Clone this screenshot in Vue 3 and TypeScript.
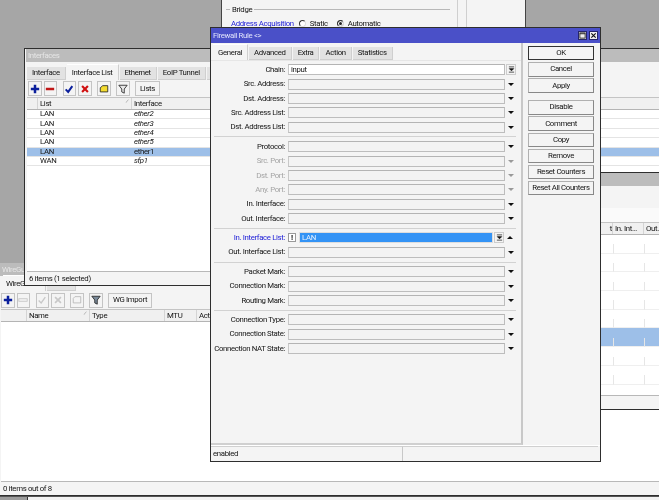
<template>
  <div class="desktop">
    <!-- bridge window, only its lower edge shows -->
    <div class="win bridge-win">
      <div class="bridge-main">
        <div class="bridge-legend"><span class="dash"></span><span>Bridge</span><span class="legend-line"></span></div>
        <div class="bridge-row">
          <span class="blue">Address Acquisition</span>
          <span class="radio"></span><span>Static</span>
          <span class="radio radio--on"></span><span>Automatic</span>
        </div>
      </div>
      <div class="bridge-side"></div>
    </div>

    <!-- wireguard window -->
    <div class="win wg-win">
      <div class="title title--off">WireGuard</div>
      <div class="tabs">
        <span class="tab tab--on wg-tab-main">WireGuard</span>
        <span class="tab">Peers</span>
      </div>
      <div class="toolbar wg-toolbar">
        <span class="tool"><svg viewBox="0 0 12 12"><path d="M4.500 1h3v3.500h3.500v3H7.500V11h-3V7.500H1v-3h3.500z" fill="#0b1f9c" /></svg></span>
        <span class="tool tool--off"><svg viewBox="0 0 12 12"><rect x="1" y="4.500" width="10" height="3" fill="#f4f4f4" stroke="#c4c4c4" /></svg></span>
        <span class="tool tool--off tool--gap"><svg viewBox="0 0 12 12"><path d="M2 6.500l3 3 5-7" fill="none" stroke="#c8c8c8" stroke-width="1.600" /></svg></span>
        <span class="tool tool--off"><svg viewBox="0 0 12 12"><path d="M2.500 2.500l7 7m0-7l-7 7" fill="none" stroke="#c8c8c8" stroke-width="2" /></svg></span>
        <span class="tool tool--off tool--gap"><svg viewBox="0 0 12 12"><path d="M1.500 4l2-2h7v7.500h-9z" fill="#f4f4f4" stroke="#b4b4b4" /></svg></span>
        <span class="tool tool--gap"><svg viewBox="0 0 12 12"><path d="M1 1.500h10L7.500 6v5l-3-1.500V6z" fill="#7a8a9a" stroke="#222" /></svg></span>
        <span class="text-tool tool--gap">WG Import</span>
      </div>
      <div class="thead wg-head">
        <span class="th" style="width: 26px"></span>
        <span class="th" style="width: 63px">Name<i class="sort">⁄</i></span>
        <span class="th" style="width: 75px">Type</span>
        <span class="th" style="width: 32px">MTU</span>
        <span class="th" style="flex: 1">Actions</span>
      </div>
      <div class="tbody"></div>
      <div class="status">0 items out of 8</div>
    </div>
    <div class="taskbar"><span class="task-btn"></span></div>

    <!-- interfaces window -->
    <div class="win if-win">
      <div class="title title--off">Interfaces</div>
      <div class="tabs if-tabs">
        <span v-for="t in ifTabs" :key="t" class="tab" :class="{ 'tab--on': t === 'Interface List' }">{{ t }}</span>
      </div>
      <div class="toolbar if-toolbar">
        <span class="tool"><svg viewBox="0 0 12 12"><path d="M4.500 1h3v3.500h3.500v3H7.500V11h-3V7.500H1v-3h3.500z" fill="#0b1f9c" /></svg></span>
        <span class="tool"><svg viewBox="0 0 12 12"><rect x="1" y="4.500" width="10" height="3" fill="#c01818" /></svg></span>
        <span class="tool tool--gap"><svg viewBox="0 0 12 12"><path d="M2 6.500l3 3 5-7" fill="none" stroke="#0b1f9c" stroke-width="2.400" /></svg></span>
        <span class="tool"><svg viewBox="0 0 12 12"><path d="M2.500 2.500l7 7m0-7l-7 7" fill="none" stroke="#d01010" stroke-width="2.600" /></svg></span>
        <span class="tool tool--gap"><svg viewBox="0 0 12 12"><path d="M1.500 4.500l3-2.500h6v7.500h-9z" fill="#f4dc30" stroke="#222" /></svg></span>
        <span class="tool tool--gap"><svg viewBox="0 0 12 12"><path d="M1 1.500h10L7.500 6v5l-3-1.500V6z" fill="#e8e8e8" stroke="#222" /></svg></span>
        <span class="text-tool tool--gap if-lists">Lists</span>
      </div>
      <div class="thead if-head">
        <span class="th" style="width: 11px"></span>
        <span class="th" style="width: 94px">List<i class="sort">⁄</i></span>
        <span class="th" style="flex: 1">Interface</span>
      </div>
      <div class="tbody">
        <div v-for="r in ifRows" :key="r.name" class="tr" :class="{ 'tr--sel': r.sel }">
          <span class="td" style="width: 11px"></span>
          <span class="td" style="width: 94px">{{ r.list }}</span>
          <span class="td" :class="{ dyn: !r.sel }">{{ r.name }}</span>
        </div>
      </div>
      <div class="status">6 items (1 selected)</div>
    </div>

    <!-- window behind the rule dialog, on the right -->
    <div class="win fw-win">
      <div class="title title--off"></div>
      <div class="fw-bar"></div>
      <div class="thead fw-head">
        <span class="th" style="width: 212px; justify-content: flex-end">t</span>
        <span class="th" style="width: 31px">In. Int...</span>
        <span class="th" style="flex: 1">Out.</span>
      </div>
      <div class="tbody">
        <template v-for="i in 8" :key="i">
          <div class="fw-note" :class="{ 'tr--sel': i === 6 }"></div>
          <div class="fw-data" :class="{ 'tr--sel': i === 6 }">
            <span class="fw-cell" style="width: 212px"></span>
            <span class="fw-cell" style="width: 31px"></span>
            <span class="fw-cell" style="flex: 1"></span>
          </div>
        </template>
      </div>
      <div class="status"></div>
    </div>

    <!-- firewall rule dialog -->
    <div class="win rule-win">
      <div class="title rule-title">
        <span>Firewall Rule &lt;&gt;</span>
        <span class="title-btns">
          <span class="title-btn"><svg viewBox="0 0 8 8"><rect x="1" y="1" width="6" height="6" fill="none" stroke="#222" /><path d="M1 2h6" stroke="#222" /></svg></span>
          <span class="title-btn"><svg viewBox="0 0 8 8"><path d="M1.500 1.500l5 5m0-5l-5 5" stroke="#111" stroke-width="1.300" /></svg></span>
        </span>
      </div>
      <div class="rule-body">
        <div class="rule-left">
          <div class="tabs rule-tabs">
            <span v-for="t in ruleTabs" :key="t" class="tab" :class="{ 'tab--on': t === 'General' }">{{ t }}</span>
          </div>
          <div class="form">
            <template v-for="(group, g) in formGroups" :key="g">
              <div v-if="g > 0" class="sep"></div>
              <div v-for="f in group" :key="f.label" class="field-row">
                <label class="field-label" :class="{ blue: f.active, muted: f.off }">{{ f.label }}:</label>
                <span v-if="f.active" class="negate">!</span>
                <span class="input" :class="{ 'input--val': f.value, 'input--short': f.active }">
                  <span v-if="f.active" class="picked">{{ f.value }}</span>
                  <template v-else>{{ f.value }}</template>
                </span>
                <span v-if="f.value" class="drop-box">
                  <svg viewBox="0 0 8 8"><path d="M1 1h6M1.500 3h5L4 5.500zM1 7h6" fill="#111" stroke="#111" stroke-width=".8" /></svg>
                </span>
                <span v-if="f.active || !f.value" class="arrow" :class="{ 'arrow--up': f.active, 'arrow--off': f.off }"></span>
              </div>
            </template>
          </div>
        </div>
        <div class="rule-buttons">
          <template v-for="(b, i) in ruleButtons" :key="b">
            <div v-if="i === 3" class="btn-gap"></div>
            <button class="btn" :class="{ 'btn--def': b === 'OK' }">{{ b }}</button>
          </template>
        </div>
      </div>
      <div class="rule-status">
        <span class="rule-status-a">enabled</span>
        <span class="rule-status-b"></span>
      </div>
    </div>
  </div>
</template>

<script setup lang="ts">
interface FormField {
  label: string
  value?: string
  off?: boolean
  active?: boolean
}

const ifTabs = ['Interface', 'Interface List', 'Ethernet', 'EoIP Tunnel', 'IP Tunnel', 'GRE Tunnel', 'VLAN']
const ifRows = [
  { list: 'LAN', name: 'ether2' },
  { list: 'LAN', name: 'ether3' },
  { list: 'LAN', name: 'ether4' },
  { list: 'LAN', name: 'ether5' },
  { list: 'LAN', name: 'ether1', sel: true },
  { list: 'WAN', name: 'sfp1' },
]

const ruleTabs = ['General', 'Advanced', 'Extra', 'Action', 'Statistics']
const ruleButtons = ['OK', 'Cancel', 'Apply', 'Disable', 'Comment', 'Copy', 'Remove', 'Reset Counters', 'Reset All Counters']

const formGroups: FormField[][] = [
  [
    { label: 'Chain', value: 'input' },
    { label: 'Src. Address' },
    { label: 'Dst. Address' },
    { label: 'Src. Address List' },
    { label: 'Dst. Address List' },
  ],
  [
    { label: 'Protocol' },
    { label: 'Src. Port', off: true },
    { label: 'Dst. Port', off: true },
    { label: 'Any. Port', off: true },
    { label: 'In. Interface' },
    { label: 'Out. Interface' },
  ],
  [
    { label: 'In. Interface List', value: 'LAN', active: true },
    { label: 'Out. Interface List' },
  ],
  [
    { label: 'Packet Mark' },
    { label: 'Connection Mark' },
    { label: 'Routing Mark' },
  ],
  [
    { label: 'Connection Type' },
    { label: 'Connection State' },
    { label: 'Connection NAT State' },
  ],
]
</script>

<style>
html,
body {
  margin: 0;
  background: #a6a6a6;
}
</style>

<style scoped>
.desktop {
  position: relative;
  width: 659px;
  height: 500px;
  overflow: hidden;
  background: #a6a6a6;
  font-family: Roboto, "Liberation Sans", sans-serif;
  font-size: 7.8px;
  letter-spacing: -0.35px;
  line-height: 1;
  color: #141414;
  filter: blur(0.3px);
}

.win {
  position: absolute;
  box-sizing: border-box;
  display: flex;
  flex-direction: column;
  background: #f4f4f4;
  border: 1px solid #2e2e2e;
}

.blue {
  color: #2222d8;
}

.muted {
  color: #a4a4a4;
}

/* bridge */
.bridge-win {
  left: 221px;
  top: -10px;
  width: 305px;
  height: 40px;
  flex-direction: row;
  border-top: 0;
  border-color: #444;
}

.bridge-main {
  width: 231px;
  padding: 16px 0 0 4px;
  border-right: 1px solid #cfcfcf;
}

.bridge-legend {
  display: flex;
  align-items: center;
  gap: 2px;
}

.dash {
  width: 4px;
  height: 1px;
  background: #b8b8b8;
}

.legend-line {
  flex: 1;
  height: 1px;
  margin-right: 7px;
  background: #b8b8b8;
}

.bridge-row {
  display: flex;
  align-items: center;
  gap: 4px;
  margin-top: 6px;
  padding-left: 5px;
  white-space: nowrap;
}

.radio {
  box-sizing: border-box;
  width: 7px;
  height: 7px;
  margin-left: 1px;
  border: 1px solid #333;
  border-right-color: #ddd;
  border-bottom-color: #ddd;
  border-radius: 50%;
  background: #fff;
}

.radio--on {
  margin-left: 5px;
  background: #222;
  box-shadow: inset 0 0 0 1px #fff;
}

.bridge-side {
  width: 8px;
  border-right: 1px solid #cfcfcf;
}

/* titles, tabs, toolbars */
.title {
  flex: none;
  height: 13px;
  padding-left: 2px;
  display: flex;
  align-items: center;
  white-space: nowrap;
}

.title--off {
  background: #bcbcbc;
  color: #e6e6e6;
}

.tabs {
  display: flex;
  flex: none;
  align-items: flex-end;
  gap: 1px;
  height: 17px;
  padding-left: 3px;
  white-space: nowrap;
}

.tab {
  display: flex;
  align-items: center;
  height: 12.5px;
  padding: 0 5px;
  background: #e2e2e2;
  border-right: 1px solid #cfcfcf;
  border-bottom: 1px solid #cfcfcf;
}

.tab--on {
  height: 15px;
  background: #f4f4f4;
  border-bottom: 0;
  border-top: 1px solid #fff;
}

.toolbar {
  display: flex;
  flex: none;
  align-items: center;
  height: 17px;
  padding-left: 1px;
  gap: 2px;
}

.tool {
  box-sizing: border-box;
  display: flex;
  align-items: center;
  justify-content: center;
  width: 13.500px;
  height: 15px;
  background: #f4f4f4;
  border: 1px solid #c4c4c4;
}

.tool svg {
  width: 10px;
  height: 10px;
}

.tool--gap {
  margin-left: 3.500px;
}

.text-tool {
  box-sizing: border-box;
  display: flex;
  align-items: center;
  justify-content: center;
  width: 44px;
  height: 15px;
  border: 1px solid #c4c4c4;
  white-space: nowrap;
}

.if-lists {
  width: 25px;
}

/* tables */
.thead {
  display: flex;
  flex: none;
  height: 11px;
  background: #f0f0f0;
  border-top: 1px solid #c4c4c4;
  border-bottom: 1px solid #b4b4b4;
}

.th {
  position: relative;
  box-sizing: border-box;
  display: flex;
  align-items: center;
  padding-left: 2px;
  border-right: 1px solid #d4d4d4;
  white-space: nowrap;
  overflow: hidden;
}

.sort {
  position: absolute;
  right: 3px;
  top: 0;
  font-size: 6px;
  color: #888;
}

.tbody {
  flex: 1;
  min-height: 0;
  overflow: hidden;
  background: #fff;
}

.tr {
  display: flex;
  align-items: center;
  box-sizing: border-box;
  height: 9.400px;
  border-bottom: 1px solid #e4e4e4;
}

.tr--sel {
  background: #9dbfe8;
}

.td {
  box-sizing: border-box;
  padding-left: 2px;
  white-space: nowrap;
}

.dyn {
  font-style: italic;
}

.status {
  flex: none;
  box-sizing: border-box;
  height: 14px;
  display: flex;
  align-items: center;
  padding-left: 2px;
  border-top: 1px solid #b8b8b8;
  background: #f4f4f4;
}

/* wireguard */
.wg-win {
  left: -1px;
  top: 263px;
  width: 670px;
  height: 233px;
  border-top: 0;
}

.wg-win .title {
  padding-left: 2px;
}

.wg-tab-main {
  margin-left: 3px;
  padding: 0 6px 0 3px;
}

.wg-win .tabs {
  height: 15px;
  padding-left: 0;
}

.wg-toolbar {
  padding-left: 1px;
  height: 18px;
}

.wg-head {
  margin-left: 1px;
}

.tbody,
.status {
  margin-left: 1px;
}

.taskbar {
  position: absolute;
  left: 0;
  top: 496px;
  width: 659px;
  height: 4px;
  background: #f2f2f2;
  border-top: 1px solid #555;
}

.task-btn {
  display: block;
  width: 27px;
  height: 4px;
  background: #9c9c9c;
  border-right: 1px solid #333;
}

/* interfaces */
.if-win {
  left: 24px;
  top: 48px;
  width: 660px;
  height: 238px;
  border-right: 0;
}

.if-win .title {
  margin-left: 1px;
}

.if-win .tbody,
.if-win .status {
  margin-left: 2px;
}

.if-win .if-head {
  margin-left: 2px;
}

.if-tabs {
  height: 18px;
  padding-left: 2px;
}

.if-toolbar {
  padding-left: 3px;
}

/* list behind dialog */
.fw-win {
  left: 400px;
  top: 172px;
  width: 270px;
  height: 238px;
  border-right: 0;
}

.fw-bar {
  flex: none;
  height: 36px;
  background: linear-gradient(#f4f4f4 60%, #fafafa 60%);
}

.fw-head {
  margin-left: 0;
}

.fw-note {
  height: 9.400px;
}

.fw-data {
  display: flex;
  height: 9.300px;
}

.fw-cell {
  box-sizing: border-box;
  border-right: 1px solid #e6e6e6;
  border-bottom: 1px solid #efefef;
}

/* rule dialog */
.rule-win {
  left: 210px;
  top: 27px;
  width: 391px;
  height: 435px;
}

.rule-title {
  justify-content: space-between;
  height: 15px;
  background: #4a50c8;
  color: #dfe2fb;
  padding-right: 2px;
}

.title-btns {
  display: flex;
  gap: 2px;
}

.title-btn {
  box-sizing: border-box;
  display: flex;
  align-items: center;
  justify-content: center;
  width: 9px;
  height: 9px;
  background: #f0f0f0;
  border: 1px solid #25256a;
}

.title-btn svg {
  width: 7px;
  height: 7px;
}

.rule-body {
  flex: 1;
  min-height: 0;
  display: flex;
}

.rule-left {
  box-sizing: border-box;
  flex: none;
  width: 312px;
  display: flex;
  flex-direction: column;
  border-right: 2px solid #c8c8c8;
  border-bottom: 2px solid #d0d0d0;
}

.rule-tabs {
  height: 17px;
  padding-left: 2px;
}

.form {
  padding: 1.500px 0 0 2px;
  border-top: 1px solid #e6e6e6;
}

.field-row {
  display: flex;
  align-items: center;
  height: 14.400px;
}

.field-label {
  width: 72px;
  text-align: right;
  white-space: nowrap;
  flex: none;
}

.input {
  box-sizing: border-box;
  display: flex;
  align-items: center;
  width: 217px;
  height: 11px;
  margin-left: 3px;
  padding-left: 2px;
  background: #f3f3f3;
  border: 1px solid #bdbdbd;
  border-top-color: #b4b4b4;
  border-left-color: #c8c8c8;
}

.input--val {
  background: #fff;
}

.input--short {
  width: 194px;
  margin-left: 0;
  padding: 0;
  border-color: #ddd;
}

.picked {
  display: flex;
  align-items: center;
  height: 100%;
  width: 100%;
  padding-left: 2px;
  background: #3393f5;
  color: #e8f2ff;
}

.negate {
  box-sizing: border-box;
  display: flex;
  align-items: center;
  justify-content: center;
  flex: none;
  width: 8px;
  height: 9px;
  margin: 0 3px 0 3px;
  background: #fff;
  border: 1px solid #999;
  font-weight: 700;
}

.drop-box {
  box-sizing: border-box;
  display: flex;
  align-items: center;
  justify-content: center;
  flex: none;
  width: 10px;
  height: 11px;
  margin-left: 1px;
  background: #f4f4f4;
  border: 1px solid #ccc;
}

.drop-box svg {
  width: 7px;
  height: 7px;
}

.arrow {
  width: 0;
  height: 0;
  margin-left: 3px;
  border-left: 3px solid transparent;
  border-right: 3px solid transparent;
  border-top: 3.500px solid #111;
}

.arrow--up {
  border-top: 0;
  border-bottom: 3.500px solid #111;
}

.arrow--off {
  border-top-color: #999;
}

.sep {
  height: 1px;
  margin: 2px 0 2px 1px;
  width: 302px;
  background: #d2d2d2;
}

.rule-buttons {
  flex: 1;
  min-width: 0;
  display: flex;
  flex-direction: column;
  gap: 1.800px;
  padding: 3px 6px 0 5px;
}

.btn-gap {
  height: 3.800px;
}

.btn {
  box-sizing: border-box;
  flex: none;
  height: 14.400px;
  padding: 0;
  font: inherit;
  letter-spacing: inherit;
  color: inherit;
  white-space: nowrap;
  background: #f4f4f4;
  border: 1px solid #b0b0b0;
  border-right-color: #888;
  border-bottom-color: #888;
}

.btn--def {
  border-color: #333;
}

.rule-status {
  flex: none;
  display: flex;
  height: 15px;
  align-items: center;
  border-top: 1px solid #fff;
}

.rule-status-a {
  box-sizing: border-box;
  display: flex;
  align-items: center;
  width: 192px;
  height: 100%;
  padding-left: 2px;
  border-top: 1px solid #d0d0d0;
  border-right: 1px solid #c8c8c8;
}

.rule-status-b {
  flex: 1;
  height: 100%;
  margin-right: 2px;
  border-top: 1px solid #d0d0d0;
}
</style>
